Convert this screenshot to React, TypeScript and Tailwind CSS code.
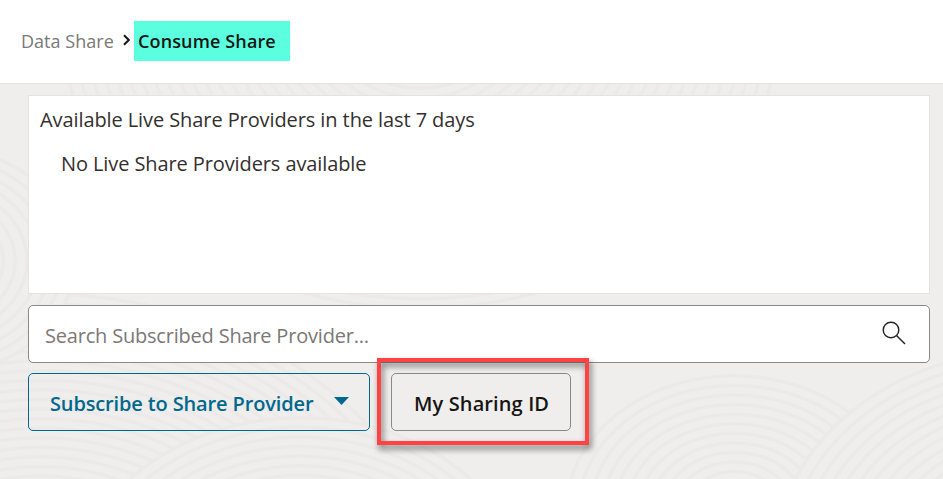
const groups = [
  { x: 40, y: 620, n: 34 },
  { x: 420, y: 20, n: 30 },
  { x: 300, y: 600, n: 19 },
  { x: 735, y: 510, n: 14 },
  { x: 1040, y: 560, n: 22 },
  { x: -70, y: 260, n: 12 },
];

function Texture() {
  return (
    <svg className="absolute inset-0 h-full w-full" viewBox="0 83 943 396" fill="none" aria-hidden="true">
      {groups.map((g, i) => (
        <g key={i} stroke="#ebeae9" strokeWidth="3.5">
          <ellipse cx={g.x} cy={g.y} rx={g.n * 12} ry={g.n * 9.6} fill="#efeeed" stroke="none" />
          {Array.from({ length: g.n }, (_, k) => (
            <ellipse key={k} cx={g.x} cy={g.y} rx={(k + 1) * 12} ry={(k + 1) * 9.6} />
          ))}
        </g>
      ))}
    </svg>
  );
}

export default function App() {
  return (
    <div className="flex h-[479px] w-[943px] flex-col overflow-hidden bg-white font-['Open_Sans','Noto_Sans',sans-serif] text-[#33302e]">
      <header className="flex h-[83px] shrink-0 items-start pl-[21px] pt-[21px] text-[18px]">
        <span className="flex h-10 w-[93px] items-center whitespace-nowrap font-normal tracking-[0.03px] text-[#7b7876]">Data Share</span>
        <svg className="ml-[8px] mt-[12px] h-[14px] w-[10px]" viewBox="0 0 10 14" fill="none" stroke="#161513" strokeWidth="2">
          <path d="M2 2.2 6.8 7 2 11.8" />
        </svg>
        <span className="ml-[2px] flex h-10 w-[156px] items-center whitespace-nowrap bg-[#5bffdf] pl-[4px] font-semibold tracking-[0.13px] text-[#161513]">Consume Share</span>
      </header>
      <main className="relative flex-1 border-t border-[#e3e2e1] bg-[#efeeed]">
        <Texture />
        <div className="relative flex flex-col pl-7 pr-[13px] pt-[11px]">
          <section className="h-[199px] border border-[#e4e3e2] bg-white pl-[11px] pt-[9px] text-[20px] leading-[30px]">
            <h2 className="whitespace-nowrap font-normal tracking-[-0.09px]">Available Live Share Providers in the last 7 days</h2>
            <p className="mt-[14px] whitespace-nowrap pl-[21px] font-normal tracking-[-0.1px]">No Live Share Providers available</p>
          </section>
          <div className="mt-[11px] flex h-[58px] items-center justify-between rounded-[5px] border border-[#8b8886] bg-white pl-[16px] pr-[23px]">
            <span className="mt-[3px] whitespace-nowrap text-[20px] font-normal tracking-[-0.2px] text-[#7b7876]">Search Subscribed Share Provider...</span>
            <svg className="mb-[3px] h-6 w-6" viewBox="0 0 24 24" fill="none" stroke="#242220" strokeWidth="1.4">
              <circle cx="9" cy="9" r="7.8" />
              <path d="m14.5 14.5 8.5 8.5" />
            </svg>
          </div>
          <div className="mt-[10px] flex gap-[21px]">
            <button className="flex h-[58px] w-[342px] items-center rounded-[5px] border border-[#00688c] pl-[21px] text-[20px] font-semibold text-[#00688c]">
              <span className="mt-[3px] w-[263px] whitespace-nowrap text-left tracking-[-0.14px]">Subscribe to Share Provider</span>
              <svg className="mb-[2px] ml-[21px] h-[8px] w-[15px]" viewBox="0 0 15 8" fill="currentColor">
                <path d="M0 0h15L7.5 8Z" />
              </svg>
            </button>
            <div className="relative">
              <button className="flex h-[58px] w-[180px] items-center whitespace-nowrap rounded-[5px] border border-[#8b8886] pl-[22px] pt-[3px] text-[20px] font-semibold tracking-[0.12px] text-[#161513]">My Sharing ID</button>
              <div className="pointer-events-none absolute -left-[14px] -top-[15px] h-[87px] w-[212px] border-4 border-[#ff4343] drop-shadow-[2px_4px_3px_rgba(0,0,0,0.55)]" />
            </div>
          </div>
        </div>
      </main>
    </div>
  );
}
